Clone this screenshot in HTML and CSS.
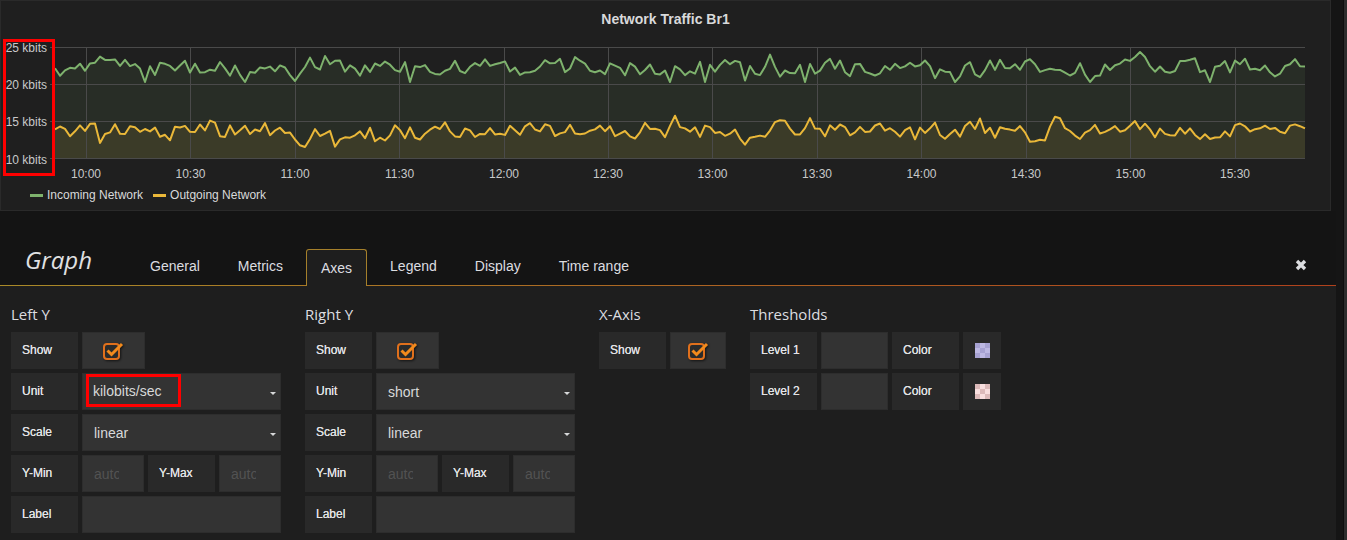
FILE: index.html
```html
<!DOCTYPE html>
<html lang="en">
<head>
<meta charset="utf-8">
<title>Graph - Axes</title>
<link rel="stylesheet" href="styles.css">
</head>
<body>
<div class="app">
  <main class="main">
    <section class="panel">
      <div class="panel-title">Network Traffic Br1</div>
      <svg class="chart" width="1331" height="147" viewBox="0 0 1331 147">
        <polygon id="gfill" class="fill-green" points=""/>
        <polygon id="yfill" class="fill-yellow" points=""/>
        <g class="grid">
          <line x1="50" y1="9.5" x2="1305" y2="9.5"/>
          <line x1="50" y1="46.5" x2="1305" y2="46.5"/>
          <line x1="50" y1="83.5" x2="1305" y2="83.5"/>
          <line x1="50" y1="120.5" x2="1305" y2="120.5"/>
          <line x1="86.5" y1="9" x2="86.5" y2="121"/>
          <line x1="190.5" y1="9" x2="190.5" y2="121"/>
          <line x1="295.5" y1="9" x2="295.5" y2="121"/>
          <line x1="399.5" y1="9" x2="399.5" y2="121"/>
          <line x1="504.5" y1="9" x2="504.5" y2="121"/>
          <line x1="608.5" y1="9" x2="608.5" y2="121"/>
          <line x1="712.5" y1="9" x2="712.5" y2="121"/>
          <line x1="817.5" y1="9" x2="817.5" y2="121"/>
          <line x1="921.5" y1="9" x2="921.5" y2="121"/>
          <line x1="1026.5" y1="9" x2="1026.5" y2="121"/>
          <line x1="1130.5" y1="9" x2="1130.5" y2="121"/>
          <line x1="1235.5" y1="9" x2="1235.5" y2="121"/>
        </g>
        <polyline id="gline" class="line-green" points=""/>
        <polyline id="yline" class="line-yellow" points=""/>
        <g class="ylabels">
          <text x="47" y="13.5">25 kbits</text>
          <text x="47" y="50.5">20 kbits</text>
          <text x="47" y="87.5">15 kbits</text>
          <text x="47" y="125.5">10 kbits</text>
        </g>
        <g class="xlabels">
          <text x="86" y="139.5">10:00</text>
          <text x="190.5" y="139.5">10:30</text>
          <text x="295" y="139.5">11:00</text>
          <text x="399.5" y="139.5">11:30</text>
          <text x="504" y="139.5">12:00</text>
          <text x="608" y="139.5">12:30</text>
          <text x="712.5" y="139.5">13:00</text>
          <text x="817" y="139.5">13:30</text>
          <text x="921.5" y="139.5">14:00</text>
          <text x="1026" y="139.5">14:30</text>
          <text x="1130.5" y="139.5">15:00</text>
          <text x="1235" y="139.5">15:30</text>
        </g>
        <rect class="mark" x="4.5" y="2.5" width="49" height="134"/>
      </svg>
      <div class="legend">
        <div class="legend-item"><span class="legend-swatch green"></span>Incoming Network</div>
        <div class="legend-item"><span class="legend-swatch yellow"></span>Outgoing Network</div>
      </div>
    </section>

    <section class="editor">
      <header class="editor-head">
        <div class="editor-title">Graph</div>
        <nav class="tabs">
          <div class="tab">General</div>
          <div class="tab">Metrics</div>
          <div class="tab active">Axes</div>
          <div class="tab">Legend</div>
          <div class="tab">Display</div>
          <div class="tab">Time range</div>
        </nav>
        <svg class="close" width="12" height="12" viewBox="0 0 12 12">
          <path d="M2 2 L10 10 M10 2 L2 10"/>
        </svg>
      </header>

      <div class="editor-body">
        <div class="section axis">
          <h2>Left Y</h2>
          <div class="rows">
            <div class="row">
              <div class="lbl">Show</div>
              <div class="val check">
                <svg class="cb" width="21" height="19" viewBox="0 0 21 19"><rect x="1" y="3" width="15" height="15" rx="3"/><path d="M4.5 9.5 L8.5 13.5 L19 3"/></svg>
              </div>
            </div>
            <div class="row">
              <div class="lbl">Unit</div>
              <div class="val select"><span class="hl">kilobits/sec</span><span class="caret"></span></div>
            </div>
            <div class="row">
              <div class="lbl">Scale</div>
              <div class="val select"><span>linear</span><span class="caret"></span></div>
            </div>
            <div class="row">
              <div class="lbl">Y-Min</div>
              <div class="val grow"><span class="ph">auto</span></div>
              <div class="lbl">Y-Max</div>
              <div class="val grow"><span class="ph">auto</span></div>
            </div>
            <div class="row">
              <div class="lbl">Label</div>
              <div class="val grow"></div>
            </div>
          </div>
        </div>

        <div class="section axis">
          <h2>Right Y</h2>
          <div class="rows">
            <div class="row">
              <div class="lbl">Show</div>
              <div class="val check">
                <svg class="cb" width="21" height="19" viewBox="0 0 21 19"><rect x="1" y="3" width="15" height="15" rx="3"/><path d="M4.5 9.5 L8.5 13.5 L19 3"/></svg>
              </div>
            </div>
            <div class="row">
              <div class="lbl">Unit</div>
              <div class="val select"><span>short</span><span class="caret"></span></div>
            </div>
            <div class="row">
              <div class="lbl">Scale</div>
              <div class="val select"><span>linear</span><span class="caret"></span></div>
            </div>
            <div class="row">
              <div class="lbl">Y-Min</div>
              <div class="val grow"><span class="ph">auto</span></div>
              <div class="lbl">Y-Max</div>
              <div class="val grow"><span class="ph">auto</span></div>
            </div>
            <div class="row">
              <div class="lbl">Label</div>
              <div class="val grow"></div>
            </div>
          </div>
        </div>

        <div class="section">
          <h2>X-Axis</h2>
          <div class="rows">
            <div class="row">
              <div class="lbl">Show</div>
              <div class="val check narrow">
                <svg class="cb" width="21" height="19" viewBox="0 0 21 19"><rect x="1" y="3" width="15" height="15" rx="3"/><path d="M4.5 9.5 L8.5 13.5 L19 3"/></svg>
              </div>
            </div>
          </div>
        </div>

        <div class="section">
          <h2>Thresholds</h2>
          <div class="rows">
            <div class="row">
              <div class="lbl">Level 1</div>
              <div class="val level"></div>
              <div class="lbl">Color</div>
              <div class="lbl swatch-cell"><span class="swatch lavender"></span></div>
            </div>
            <div class="row">
              <div class="lbl">Level 2</div>
              <div class="val level"></div>
              <div class="lbl">Color</div>
              <div class="lbl swatch-cell"><span class="swatch pink"></span></div>
            </div>
          </div>
        </div>
      </div>
    </section>
  </main>
  <div class="scrollbar"></div>
</div>
<script src="chart.js"></script>
</body>
</html>
```

FILE: styles.css
```css
* { box-sizing: border-box; }
html, body { margin: 0; height: 100%; }
body {
  background: #151515;
  font-family: "Liberation Sans", Arial, sans-serif;
  color: #d8d9da;
  overflow: hidden;
}
.app { display: flex; height: 540px; }
.main { width: 1343px; flex: none; }
.scrollbar { width: 4px; background: #2d2d2d; border-left: 1px solid #0e0e0e; }

/* panel */
.panel {
  width: 1331px;
  height: 211px;
  background: #1f1f1f;
  box-shadow: inset 0 0 0 1px #2a2a2a;
}
.panel-title {
  height: 38px;
  line-height: 38px;
  text-align: center;
  font-weight: bold;
  font-size: 14px;
  color: #d8d9da;
}
.chart { display: block; }
.chart text { font-family: "Liberation Sans", Arial, sans-serif; font-size: 12px; fill: #c8c9ca; }
.ylabels text { text-anchor: end; }
.xlabels text { text-anchor: middle; }
.grid line { stroke: #4a4a4a; stroke-width: 1; }
.fill-green { fill: rgba(126, 178, 109, 0.1); }
.fill-yellow { fill: rgba(234, 184, 57, 0.1); }
.line-green { fill: none; stroke: #7eb26d; stroke-width: 2; stroke-linejoin: round; }
.line-yellow { fill: none; stroke: #eab839; stroke-width: 2; stroke-linejoin: round; }
.mark { fill: none; stroke: #ff0000; stroke-width: 3; }

.legend {
  display: flex;
  align-items: center;
  height: 20px;
  padding-left: 30px;
  font-size: 12px;
  color: #d8d9da;
}
.legend-item { display: flex; align-items: center; margin-right: 10px; }
.legend-swatch { width: 13px; height: 3px; margin-right: 4px; }
.legend-swatch.green { background: #7eb26d; }
.legend-swatch.yellow { background: #eab839; }

/* editor */
.editor { width: 1336px; }
.editor-head {
  display: flex;
  align-items: flex-end;
  height: 75px;
  background: #141414;
  border-bottom: 1px solid #a8702a;
  border-image: linear-gradient(to right, #a98a28, #b0411c) 1;
  padding: 0 29px 0 25px;
}
.editor-title {
  width: 110px;
  font-family: "Open Sans", sans-serif;
  font-style: italic;
  font-size: 24px;
  line-height: 36px;
  margin-bottom: 7px;
  color: #e0e1e2;
}
.tabs { display: flex; gap: 8px; margin-bottom: -1px; }
.tab {
  font-size: 14px;
  line-height: 32px;
  padding: 0 14px 4px;
  border: 1px solid transparent;
  border-bottom: 0;
  border-radius: 3px 3px 0 0;
  color: #dcdde0;
}
.tab.active {
  background: #1e1e1e;
  border-color: #a5802b;
  padding-top: 2px;
  padding-bottom: 2px;
}
.close { margin-left: auto; margin-bottom: 14px; }
.close path { stroke: #dcdde0; stroke-width: 3.4; fill: none; }

.editor-body {
  display: flex;
  gap: 24px;
  height: 254px;
  padding: 17px 0 0 11px;
  background: #1e1e1e;
}
.section h2 {
  font-family: "Open Sans", sans-serif;
  font-weight: normal;
  font-size: 15px;
  line-height: 22px;
  margin: 0 0 7px;
  color: #dcdde0;
}
.section.axis { width: 270px; }
.rows { display: flex; flex-direction: column; gap: 4px; }
.row { display: flex; gap: 4px; height: 37px; }
.lbl {
  width: 67px;
  flex: none;
  background: #292929;
  font-size: 12px;
  padding-left: 11px;
  padding-bottom: 1px;
  display: flex;
  align-items: center;
  color: #e2e3e5;
  text-shadow: 0 0 0.4px #e2e3e5;
}
.val {
  background: #333333;
  box-shadow: inset 0 0 0 1px #2d2d2d;
  font-size: 14px;
  padding-left: 12px;
  display: flex;
  align-items: center;
}
.val.grow { flex: 1; }
.val.check { width: 63px; padding: 0; justify-content: center; }
.val.check.narrow { width: 56px; }
.val.select { flex: 1; justify-content: space-between; padding-right: 5px; }
.val.level { width: 67px; }
.caret {
  width: 0; height: 0;
  border-left: 3px solid transparent;
  border-right: 3px solid transparent;
  border-top: 3px solid #d8d9da;
  margin-top: 4px;
}
.hl {
  display: flex;
  align-items: center;
  width: 95px;
  height: 33px;
  margin-left: -8px;
  margin-top: -2px;
  padding-left: 4px;
  border: 3px solid #ff0000;
}
.ph { width: 25px; overflow: hidden; white-space: nowrap; color: #525252; }

.cb { filter: drop-shadow(1px 1px 1px rgba(0, 0, 0, 0.6)); }
.cb rect { fill: #2b2b2b; stroke: #e0701c; stroke-width: 2; }
.cb path { fill: none; stroke: #f28a1c; stroke-width: 3; }

.swatch-cell { width: 38px; padding: 0; justify-content: center; }
.swatch { width: 15px; height: 15px; }
.swatch.lavender {
  background: repeating-conic-gradient(#bdb8e3 0 25%, #a7a2d2 0 50%) 0 0 / 10px 10px;
}
.swatch.pink {
  background: repeating-conic-gradient(#f8dede 0 25%, #dcbaba 0 50%) 0 0 / 10px 10px;
}
```

FILE: chart.js
```js
(function () {
  function mulberry32(a) {
    return function () {
      a |= 0; a = a + 0x6D2B79F5 | 0;
      var t = Math.imul(a ^ a >>> 15, 1 | a);
      t = t + Math.imul(t ^ t >>> 7, 61 | t) ^ t;
      return ((t ^ t >>> 14) >>> 0) / 4294967296;
    };
  }
  var X0 = 55, X1 = 1305, STEP = 5, BOTTOM = 121;

  function series(seed, mean, lo, hi) {
    var rnd = mulberry32(seed);
    var pts = [];
    var v = mean;
    for (var x = X0; x <= X1; x += STEP) {
      v = mean + 0.3 * (v - mean) + (rnd() - 0.5) * 17;
      var r = rnd();
      if (r < 0.09) v += 9;
      else if (r > 0.95) v -= 6;
      if (v < lo) v = lo;
      if (v > hi) v = hi;
      pts.push([x, Math.round(v * 10) / 10]);
    }
    return pts;
  }

  function draw(pts, lineId, fillId) {
    var s = pts.map(function (p) { return p[0] + ',' + p[1]; }).join(' ');
    document.getElementById(lineId).setAttribute('points', s);
    document.getElementById(fillId).setAttribute('points',
      s + ' ' + X1 + ',' + BOTTOM + ' ' + X0 + ',' + BOTTOM);
  }

  draw(series(7, 29.5, 14, 44), 'gline', 'gfill');
  draw(series(21, 92.5, 77, 109), 'yline', 'yfill');
})();
```
